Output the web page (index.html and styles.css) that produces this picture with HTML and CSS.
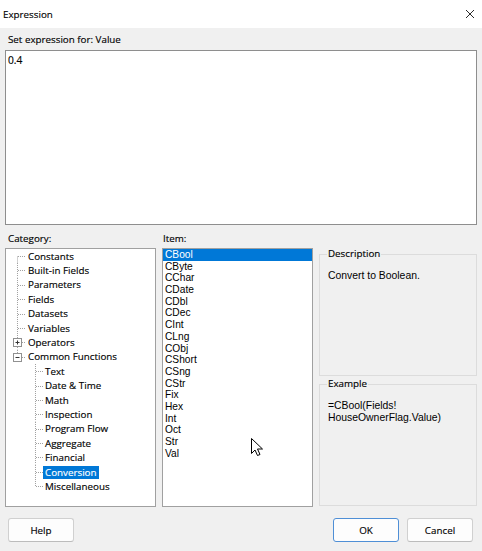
FILE: index.html
```html
<!DOCTYPE html>
<html>
<head>
<meta charset="utf-8">
<link rel="stylesheet" href="styles.css">
</head>
<body>
<div class="dialog">
  <div class="titlebar">
    <span class="title">Expression</span>
    <svg class="close" width="10" height="10" viewBox="0 0 10 10"><path d="M1 1L9 9M9 1L1 9"/></svg>
  </div>
  <div class="main">
    <div class="set-label">Set expression for: Value</div>
    <div class="expr">0.4</div>
    <div class="panels">
      <div class="plabel">Category:</div>
      <div class="plabel">Item:</div>
      <div></div>
      <div class="tree">
        <div class="node"><svg class="cn cr" viewBox="0 0 20 14.4"><path class="dot" d="M11.5 7.5V14.4M12 7.5H20"/></svg><span class="nl">Constants</span></div>
        <div class="node"><svg class="cn cr" viewBox="0 0 20 14.4"><path class="dot" d="M11.5 0V14.4M12 7.5H20"/></svg><span class="nl">Built-in Fields</span></div>
        <div class="node"><svg class="cn cr" viewBox="0 0 20 14.4"><path class="dot" d="M11.5 0V14.4M12 7.5H20"/></svg><span class="nl">Parameters</span></div>
        <div class="node"><svg class="cn cr" viewBox="0 0 20 14.4"><path class="dot" d="M11.5 0V14.4M12 7.5H20"/></svg><span class="nl">Fields</span></div>
        <div class="node"><svg class="cn cr" viewBox="0 0 20 14.4"><path class="dot" d="M11.5 0V14.4M12 7.5H20"/></svg><span class="nl">Datasets</span></div>
        <div class="node"><svg class="cn cr" viewBox="0 0 20 14.4"><path class="dot" d="M11.5 0V14.4M12 7.5H20"/></svg><span class="nl">Variables</span></div>
        <div class="node"><svg class="cn cr" viewBox="0 0 20 14.4"><path class="dot" d="M11.5 0V3M11.5 12V14.4M16 7.5H20"/><rect class="box" x="7.5" y="3.5" width="8" height="8"/><path class="sign" d="M9.5 7.5H13.5M11.5 5.5V9.5"/></svg><span class="nl">Operators</span></div>
        <div class="node"><svg class="cn cr" viewBox="0 0 20 14.4"><path class="dot" d="M11.5 0V3M16 7.5H20"/><rect class="box" x="7.5" y="3.5" width="8" height="8"/><path class="sign" d="M9.5 7.5H13.5"/></svg><span class="nl">Common Functions</span></div>
        <div class="node"><svg class="cn cc" viewBox="0 0 37 14.4"><path class="dot" d="M29.5 0V14.4M30 7.5H37"/></svg><span class="nl">Text</span></div>
        <div class="node"><svg class="cn cc" viewBox="0 0 37 14.4"><path class="dot" d="M29.5 0V14.4M30 7.5H37"/></svg><span class="nl">Date &amp; Time</span></div>
        <div class="node"><svg class="cn cc" viewBox="0 0 37 14.4"><path class="dot" d="M29.5 0V14.4M30 7.5H37"/></svg><span class="nl">Math</span></div>
        <div class="node"><svg class="cn cc" viewBox="0 0 37 14.4"><path class="dot" d="M29.5 0V14.4M30 7.5H37"/></svg><span class="nl">Inspection</span></div>
        <div class="node"><svg class="cn cc" viewBox="0 0 37 14.4"><path class="dot" d="M29.5 0V14.4M30 7.5H37"/></svg><span class="nl">Program Flow</span></div>
        <div class="node"><svg class="cn cc" viewBox="0 0 37 14.4"><path class="dot" d="M29.5 0V14.4M30 7.5H37"/></svg><span class="nl">Aggregate</span></div>
        <div class="node"><svg class="cn cc" viewBox="0 0 37 14.4"><path class="dot" d="M29.5 0V14.4M30 7.5H37"/></svg><span class="nl">Financial</span></div>
        <div class="node"><svg class="cn cc" viewBox="0 0 37 14.4"><path class="dot" d="M29.5 0V14.4M30 7.5H37"/></svg><span class="nl sel">Conversion</span></div>
        <div class="node"><svg class="cn cc" viewBox="0 0 37 14.4"><path class="dot" d="M29.5 0V7.5M30 7.5H37"/></svg><span class="nl">Miscellaneous</span></div>
      </div>
      <div class="items">
        <div class="item sel">CBool</div>
        <div class="item">CByte</div>
        <div class="item">CChar</div>
        <div class="item">CDate</div>
        <div class="item">CDbl</div>
        <div class="item">CDec</div>
        <div class="item">CInt</div>
        <div class="item">CLng</div>
        <div class="item">CObj</div>
        <div class="item">CShort</div>
        <div class="item">CSng</div>
        <div class="item">CStr</div>
        <div class="item">Fix</div>
        <div class="item">Hex</div>
        <div class="item">Int</div>
        <div class="item">Oct</div>
        <div class="item">Str</div>
        <div class="item">Val</div>
        <svg class="cursor" width="13" height="20" viewBox="0 0 13 20"><path d="M1.5 1.5V16.5L5 13L7.5 18.5L10 17.5L7.5 12H12.5Z"/></svg>
      </div>
      <div class="side">
        <fieldset class="group">
          <legend>Description</legend>
          <p class="gtext">Convert to Boolean.</p>
        </fieldset>
        <fieldset class="group">
          <legend>Example</legend>
          <p class="gtext">=CBool(Fields!<br>HouseOwnerFlag.Value)</p>
        </fieldset>
      </div>
    </div>
  </div>
  <div class="buttons">
    <button class="btn">Help</button>
    <span class="spacer"></span>
    <button class="btn default">OK</button>
    <button class="btn">Cancel</button>
  </div>
</div>
</body>
</html>
```
FILE: styles.css
```css
html, body {
  margin: 0;
  padding: 0;
  background: #f0f0f0;
}
.dialog {
  width: 482px;
  height: 551px;
  background: #f0f0f0;
  font-family: "Open Sans", "Noto Sans", sans-serif;
  font-size: 9.8px;
  color: #000;
  overflow: hidden;
  -webkit-text-stroke: 0.15px #000;
}
.titlebar {
  height: 28px;
  background: #ffffff;
  display: flex;
  align-items: center;
  justify-content: space-between;
  padding: 1px 7px 0 3px;
  box-sizing: border-box;
}
.title {
  font-size: 9.8px;
  line-height: 14px;
}
.close path {
  stroke: #2b2b2b;
  stroke-width: 1;
  fill: none;
}
.close {
  margin-top: -1px;
}
.main {
  padding: 0 5px;
}
.set-label {
  padding: 5px 0 0 3px;
  line-height: 14px;
}
.expr {
  margin-top: 3px;
  height: 175px;
  box-sizing: border-box;
  border: 1px solid #8e8e8e;
  background: #ffffff;
  padding: 2px 2px;
  line-height: 14px;
  font-size: 10.2px;
}
.panels {
  margin-top: 7px;
  display: grid;
  grid-template-columns: 151px 151px 1fr;
  grid-template-rows: 16px 259px;
  column-gap: 6px;
}
.plabel {
  line-height: 14px;
  padding-left: 3px;
}
.plabel:nth-child(2) {
  padding-left: 1px;
}
.tree {
  box-sizing: border-box;
  border: 1px solid #a0a0a0;
  background: #ffffff;
  display: flex;
  flex-direction: column;
}
.node {
  display: flex;
  align-items: center;
  height: 14.4px;
}
.cn {
  flex: none;
  height: 14.4px;
  display: block;
}
.cr { width: 20px; }
.cc { width: 37px; }
.dot {
  stroke: #a0a0a0;
  stroke-width: 1;
  stroke-dasharray: 1 1;
  fill: none;
}
.box {
  stroke: #919191;
  stroke-width: 1;
  fill: #ffffff;
}
.sign {
  stroke: #333333;
  stroke-width: 1;
  fill: none;
}
.nl {
  padding: 0 2px;
  line-height: 13px;
  white-space: nowrap;
}
.nl.sel {
  background: #0078d7;
  color: #ffffff;
  -webkit-text-stroke: 0.15px #ffffff;
}
.items {
  box-sizing: border-box;
  border: 1px solid #a0a0a0;
  background: #ffffff;
  font-family: "Liberation Sans", Arial, sans-serif;
  font-size: 10.2px;
  position: relative;
  -webkit-text-stroke: 0;
}
.item {
  line-height: 11.7px;
  height: 11.7px;
  padding-left: 2px;
}
.item.sel {
  background: #0078d7;
  color: #ffffff;
}
.cursor {
  position: absolute;
  left: 87px;
  top: 188px;
}
.cursor path {
  fill: #ffffff;
  stroke: #000000;
  stroke-width: 1;
  stroke-linejoin: round;
}
.side {
  display: flex;
  flex-direction: column;
  gap: 2px;
}
.group {
  margin: 0;
  height: 128px;
  box-sizing: border-box;
  border: 1px solid #dcdcdc;
  padding: 0 6px 0 7px;
  min-width: 0;
}
.group legend {
  padding: 0 1px;
  line-height: 12px;
  font-size: 9.8px;
}
.gtext {
  margin: 10px 0 0 1px;
  font-family: "Liberation Sans", Arial, sans-serif;
  font-size: 10.4px;
  line-height: 12px;
  -webkit-text-stroke: 0;
}
.buttons {
  margin-top: 11px;
  display: flex;
  padding: 0 9px 0 8px;
  gap: 8px;
}
.spacer {
  flex: 1;
}
.btn {
  width: 66px;
  height: 24px;
  box-sizing: border-box;
  border: 1px solid #d0d0d0;
  border-bottom-color: #bcbcbc;
  border-radius: 3px;
  background: #fdfdfd;
  font-family: "Open Sans", "Noto Sans", sans-serif;
  font-size: 9.8px;
  color: #000;
  padding: 0;
  -webkit-text-stroke: 0.15px #000;
}
.btn.default {
  border: 1px solid #4f8fd6;
}
```
